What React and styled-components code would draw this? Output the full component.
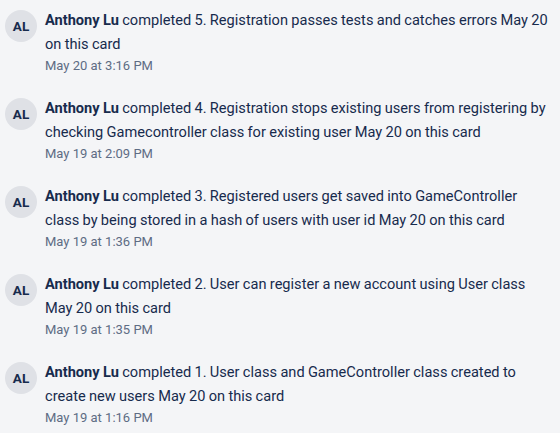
import React from 'react';
import styled, { createGlobalStyle } from 'styled-components';

const GlobalStyle = createGlobalStyle`
  html, body {
    margin: 0;
    padding: 0;
    background: #f4f5f7;
  }
  body {
    font-family: Roboto, "Noto Sans", "Liberation Sans", sans-serif;
    color: #172b4d;
  }
`;

const Feed = styled.div`
  display: flex;
  flex-direction: column;
  gap: 20px;
  padding: 8px 10px 0 5px;
`;

const Entry = styled.div`
  display: flex;
  align-items: flex-start;
  gap: 8px;
`;

const Avatar = styled.div`
  flex: none;
  width: 32px;
  height: 32px;
  margin-top: 2px;
  border-radius: 50%;
  background: #dfe1e6;
  color: #172b4d;
  font-size: 13.5px;
  font-weight: 700;
  display: flex;
  align-items: center;
  justify-content: center;
`;

const Body = styled.div`
  flex: 1;
  min-width: 0;
`;

const Text = styled.div`
  font-size: 14.6px;
  line-height: 24px;
  word-spacing: -0.3px;
`;

const Name = styled.span`
  font-weight: 700;
`;

const Date = styled.div`
  font-size: 13px;
  line-height: 20px;
  color: #5e6c84;
`;

const items = [
  { text: '5. Registration passes tests and catches errors May 20 on this card', date: 'May 20 at 3:16 PM' },
  { text: '4. Registration stops existing users from registering by checking Gamecontroller class for existing user May 20 on this card', date: 'May 19 at 2:09 PM' },
  { text: '3. Registered users get saved into GameController class by being stored in a hash of users with user id May 20 on this card', date: 'May 19 at 1:36 PM' },
  { text: '2. User can register a new account using User class May 20 on this card', date: 'May 19 at 1:35 PM' },
  { text: '1. User class and GameController class created to create new users May 20 on this card', date: 'May 19 at 1:16 PM' },
];

const App = () => (
  <>
    <GlobalStyle />
    <Feed>
      {items.map((item) => (
        <Entry key={item.date + item.text}>
          <Avatar>AL</Avatar>
          <Body>
            <Text>
              <Name>Anthony Lu</Name> completed {item.text}
            </Text>
            <Date>{item.date}</Date>
          </Body>
        </Entry>
      ))}
    </Feed>
  </>
);

export default App;
